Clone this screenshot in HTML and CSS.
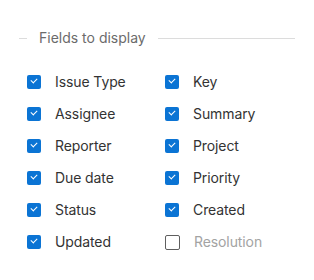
FILE: index.html
```html
<!DOCTYPE html>
<html>
<head>
<meta charset="utf-8">
<link rel="stylesheet" href="styles.css">
</head>
<body>
<div class="panel">
  <div class="legend">
    <span class="line short"></span>
    <span class="legend-text">Fields to display</span>
    <span class="line long"></span>
  </div>
  <div class="grid">
    <label class="item"><span class="box on"></span><span class="label">Issue Type</span></label>
    <label class="item"><span class="box on"></span><span class="label">Key</span></label>
    <label class="item"><span class="box on"></span><span class="label">Assignee</span></label>
    <label class="item"><span class="box on"></span><span class="label">Summary</span></label>
    <label class="item"><span class="box on"></span><span class="label">Reporter</span></label>
    <label class="item"><span class="box on"></span><span class="label">Project</span></label>
    <label class="item"><span class="box on"></span><span class="label">Due date</span></label>
    <label class="item"><span class="box on"></span><span class="label">Priority</span></label>
    <label class="item"><span class="box on"></span><span class="label">Status</span></label>
    <label class="item"><span class="box on"></span><span class="label">Created</span></label>
    <label class="item"><span class="box on"></span><span class="label">Updated</span></label>
    <label class="item"><span class="box off"></span><span class="label muted">Resolution</span></label>
  </div>
</div>
</body>
</html>
```

FILE: styles.css
```css
html, body {
  margin: 0;
  padding: 0;
  background: #ffffff;
}
body {
  font-family: Inter, "Noto Sans", sans-serif;
  width: 314px;
  height: 280px;
  overflow: hidden;
}
.panel {
  padding: 28px 19px 0 19px;
}
.legend {
  display: flex;
  align-items: center;
  gap: 12px;
  height: 20px;
}
.line {
  height: 1px;
  background: #dcdcdc;
}
.line.short {
  width: 8px;
}
.line.long {
  flex: 1;
}
.legend-text {
  font-size: 14px;
  color: #6b6b6b;
  line-height: 20px;
}
.grid {
  display: grid;
  grid-template-columns: 138px 1fr;
  padding-left: 8px;
  margin-top: 27px;
  grid-auto-rows: 32px;
}
.item {
  display: flex;
  align-items: center;
  gap: 14px;
  height: 14px;
}
.box {
  width: 14px;
  height: 14px;
  border-radius: 2px;
  box-sizing: border-box;
  flex: none;
  position: relative;
}
.box.on {
  background: #0b74d4;
}
.box.on::after {
  content: "";
  position: absolute;
  left: 4px;
  top: 3px;
  width: 5px;
  height: 3px;
  border-left: 1.6px solid #fff;
  border-bottom: 1.6px solid #fff;
  transform: rotate(-45deg);
}
.box.off {
  width: 15px;
  height: 15px;
  border: 1px solid #5f5f5f;
  border-radius: 2px;
  background: #fff;
}
.label {
  font-size: 14px;
  letter-spacing: -0.1px;
  color: #333333;
  line-height: 16px;
}
.label.muted {
  color: #a3a3a3;
}
```
